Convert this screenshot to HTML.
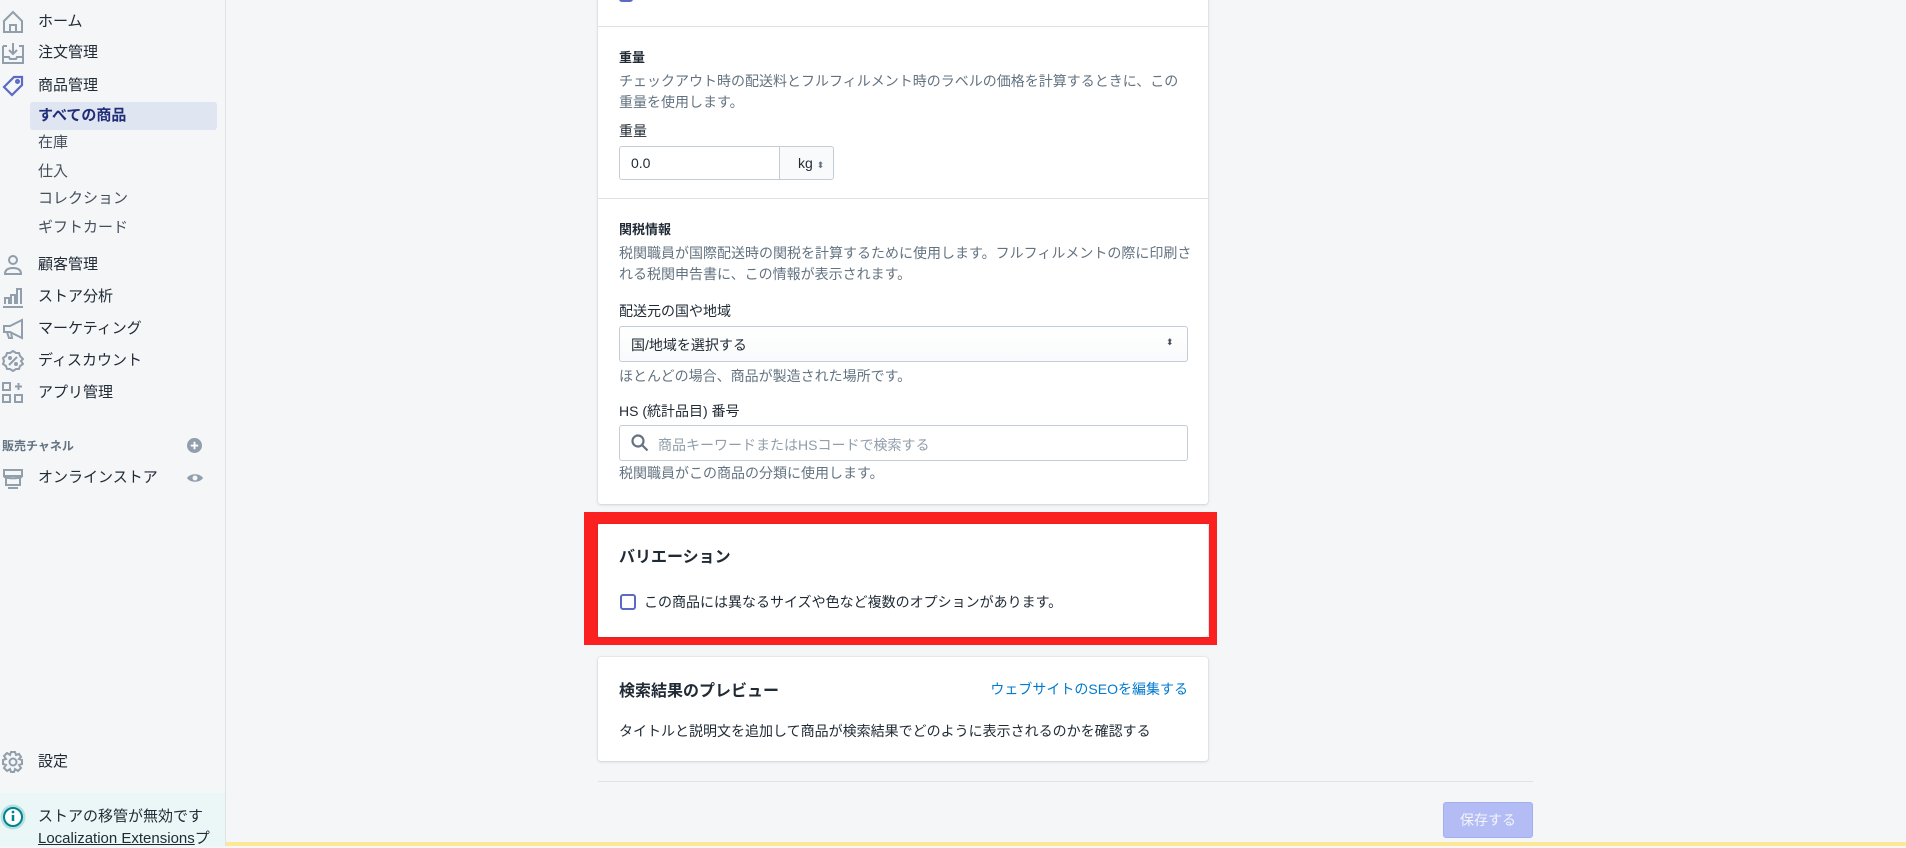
<!DOCTYPE html>
<html><head><meta charset="utf-8"><style>
*{box-sizing:border-box;margin:0;padding:0}
body{width:1906px;height:846px;overflow:hidden;background:#f4f6f8;font-family:"Liberation Sans","Noto Sans CJK JP",sans-serif;color:#212b36;position:relative}
.a{position:absolute;white-space:nowrap}
.side{position:absolute;left:0;top:0;width:226px;height:846px;background:#f4f6f8;border-right:1px solid #dfe3e8}
.nav{font-size:15px;color:#212b36;left:38px;line-height:20px}
.sub{font-size:15px;color:#454f5b;left:38px;line-height:20px}
.ic{position:absolute;left:2px}
.card{position:absolute;left:598px;width:610px;background:#fff;box-shadow:0 0 0 1px rgba(63,63,68,.05),0 1px 3px rgba(63,63,68,.15);border-radius:3px}
.h{font-size:13px;font-weight:bold;color:#212b36}
.d{font-size:14px;color:#637381;line-height:21px}
.l{font-size:14px;color:#212b36}
.inp{position:absolute;border:1px solid #c4cdd5;border-radius:3px;background:#fff}
</style></head><body>
<div class="side">
<svg class="ic" style="top:10px" width="22" height="24" viewBox="0 0 22 24" fill="none" stroke="#919eab" stroke-width="2"><path d="M2 11L11 2l9 9v11H2z M8 22v-7h6v7"/></svg>
<div class="a nav" style="top:12px">ホーム</div>
<svg class="ic" style="top:42px" width="22" height="22" viewBox="0 0 22 22" fill="none" stroke="#919eab" stroke-width="2"><path d="M1 4v17h20V4h-4 M5 4H1 M11 1v11 M7 8l4 4 4-4 M1 15h6l1 2h6l1-2h6"/></svg>
<div class="a nav" style="top:43px">注文管理</div>
<svg class="ic" style="top:75px" width="22" height="22" viewBox="0 0 22 22" fill="none" stroke="#5c6ac4" stroke-width="2.2"><path d="M2 12L12 2h8v8L10 20z"/><circle cx="15.5" cy="6.5" r="1.4"/></svg>
<div class="a nav" style="top:76px">商品管理</div>
<div class="a" style="left:30px;top:102px;width:187px;height:28px;background:#e0e5f2;border-radius:3px"></div>
<div class="a nav" style="top:106px;font-weight:bold;color:#202e78">すべての商品</div>
<div class="a sub" style="top:133px">在庫</div>
<div class="a sub" style="top:162px">仕入</div>
<div class="a sub" style="top:189px">コレクション</div>
<div class="a sub" style="top:218px">ギフトカード</div>
<svg class="ic" style="top:254px" width="22" height="22" viewBox="0 0 22 22" fill="none" stroke="#919eab" stroke-width="2"><circle cx="11" cy="6" r="4"/><path d="M3 20c0-5 4-6 8-6s8 1 8 6z"/></svg>
<div class="a nav" style="top:255px">顧客管理</div>
<svg class="ic" style="top:286px" width="22" height="22" viewBox="0 0 22 22" fill="none" stroke="#919eab" stroke-width="2"><path d="M1 21h20 M3 18v-6h4v6 M9 18V9h4v9 M15 18V3h4v15"/></svg>
<div class="a nav" style="top:287px">ストア分析</div>
<svg class="ic" style="top:318px" width="22" height="22" viewBox="0 0 22 22" fill="none" stroke="#919eab" stroke-width="2"><path d="M2 8h6l12-6v18L8 14H2z M5 14l2 6h3l-1-6"/></svg>
<div class="a nav" style="top:319px">マーケティング</div>
<svg class="ic" style="top:350px" width="22" height="22" viewBox="0 0 22 22" fill="none" stroke="#919eab" stroke-width="2"><path d="M11 1l3 2 3 0 1 3 3 3-2 2 2 3-3 2-1 3h-3l-3 2-3-2H5l-1-3-3-2 1-3-1-3 3-2 1-3h3z M7 15l8-8"/><circle cx="8" cy="8" r="1"/><circle cx="14" cy="14" r="1"/></svg>
<div class="a nav" style="top:351px">ディスカウント</div>
<svg class="ic" style="top:382px" width="22" height="22" viewBox="0 0 22 22" fill="none" stroke="#919eab" stroke-width="2"><rect x="1" y="1" width="7" height="7"/><rect x="1" y="13" width="7" height="7"/><rect x="13" y="13" width="7" height="7"/><path d="M16.5 1v7 M13 4.5h7"/></svg>
<div class="a nav" style="top:383px">アプリ管理</div>
<div class="a" style="left:2px;top:437px;font-size:12px;color:#637381;font-weight:bold">販売チャネル</div>
<svg class="a" style="left:187px;top:438px" width="15" height="15" viewBox="0 0 16 16"><circle cx="8" cy="8" r="8" fill="#919eab"/><path d="M8 4v8M4 8h8" stroke="#fff" stroke-width="2"/></svg>
<svg class="ic" style="top:468px" width="22" height="22" viewBox="0 0 22 22" fill="none" stroke="#919eab" stroke-width="2"><path d="M2 2h18v6H2z M2 8c0 3 18 3 18 0 M4 10v7h14v-7 M6 20h10"/></svg>
<div class="a nav" style="top:468px">オンラインストア</div>
<svg class="a" style="left:186px;top:472px" width="18" height="12" viewBox="0 0 18 12"><path d="M1 6c3-5 13-5 16 0-3 5-13 5-16 0z" fill="#919eab"/><circle cx="9" cy="6" r="2.5" fill="#f4f6f8"/></svg>
<svg class="ic" style="top:751px" width="22" height="22" viewBox="0 0 22 22" fill="none" stroke="#919eab" stroke-width="2"><circle cx="11" cy="11" r="3.5"/><path d="M9 1h4l1 3 3-1 2 3-2 2 0 0 3 1v4l-3 1 2 3-3 3-3-2-1 3H9l-1-3-3 2-3-3 2-3-3-1V9l3-1-2-3 3-3 3 2z"/></svg>
<div class="a nav" style="top:752px">設定</div>
<div class="a" style="left:0;top:793px;width:225px;height:53px;background:#ebf7f6"></div>
<svg class="a" style="left:0;top:804px" width="26" height="26" viewBox="0 0 26 26"><circle cx="13" cy="13" r="12.5" fill="#b4e1e0"/><circle cx="13" cy="13" r="9" fill="#fff" stroke="#00848e" stroke-width="2"/><path d="M13 11v6" stroke="#00848e" stroke-width="2.5"/><circle cx="13" cy="8" r="1.4" fill="#00848e"/></svg>
<div class="a" style="left:38px;top:805px;font-size:15px">ストアの移管が無効です</div>
<div class="a" style="left:38px;top:827px;font-size:15px"><span style="text-decoration:underline">Localization Extensions</span>プ</div>
</div>

<div class="card" style="top:-4px;height:508px;border-radius:0 0 3px 3px">
 <div class="a" style="left:21px;top:0;width:14px;height:6px;border:2px solid #5c6ac4;border-top:none;border-radius:0 0 3px 3px"></div>
 <div class="a" style="left:0;top:30px;width:610px;height:1px;background:#dfe3e8"></div>
 <div class="a h" style="left:21px;top:51px">重量</div>
 <div class="a d" style="left:21px;top:75px;white-space:normal;width:570px">チェックアウト時の配送料とフルフィルメント時のラベルの価格を計算するときに、この重量を使用します。</div>
 <div class="a l" style="left:21px;top:125px">重量</div>
 <div class="inp" style="left:21px;top:150px;width:215px;height:34px"></div>
 <div class="a" style="left:181px;top:151px;width:54px;height:32px;background:#f9fafb;border-left:1px solid #c4cdd5;border-radius:0 3px 3px 0"></div>
 <div class="a l" style="left:33px;top:159px">0.0</div>
 <div class="a l" style="left:200px;top:159px">kg <span style="font-size:9px;color:#637381">⬍</span></div>
 <div class="a" style="left:0;top:202px;width:610px;height:1px;background:#dfe3e8"></div>
 <div class="a h" style="left:21px;top:223px">関税情報</div>
 <div class="a d" style="left:21px;top:247px;white-space:normal;width:585px">税関職員が国際配送時の関税を計算するために使用します。フルフィルメントの際に印刷される税関申告書に、この情報が表示されます。</div>
 <div class="a l" style="left:21px;top:305px">配送元の国や地域</div>
 <div class="inp" style="left:21px;top:330px;width:569px;height:36px;background:linear-gradient(#fff,#f9fafb)"></div>
 <div class="a l" style="left:33px;top:339px">国/地域を選択する</div>
 <div class="a" style="left:568px;top:341px;font-size:9px;color:#454f5b">⬍</div>
 <div class="a d" style="left:21px;top:370px">ほとんどの場合、商品が製造された場所です。</div>
 <div class="a l" style="left:21px;top:405px">HS (統計品目) 番号</div>
 <div class="inp" style="left:21px;top:429px;width:569px;height:36px"></div>
 <svg class="a" style="left:33px;top:438px" width="18" height="18" viewBox="0 0 18 18" fill="none" stroke="#637381" stroke-width="2.2"><circle cx="7" cy="7" r="5.5"/><path d="M11 11l5.5 5.5"/></svg>
 <div class="a" style="left:60px;top:439px;font-size:14px;color:#919eab">商品キーワードまたはHSコードで検索する</div>
 <div class="a d" style="left:21px;top:467px">税関職員がこの商品の分類に使用します。</div>
</div>

<div class="a" style="left:584px;top:512px;width:633px;height:133px;border:8px solid #fb2121;border-width:12px 8px 8px 14px"></div>
<div class="card" style="top:524px;height:113px">
 <div class="a" style="left:21px;top:19px;font-size:16px;font-weight:bold">バリエーション</div>
 <div class="a" style="left:22px;top:70px;width:16px;height:16px;border:2px solid #5c6ac4;border-radius:3px"></div>
 <div class="a" style="left:46px;top:68px;font-size:14px">この商品には異なるサイズや色など複数のオプションがあります。</div>
</div>

<div class="card" style="top:657px;height:104px">
 <div class="a" style="left:21px;top:20px;font-size:16px;font-weight:bold">検索結果のプレビュー</div>
 <div class="a" style="right:20px;top:22px;font-size:14px;color:#007ace">ウェブサイトのSEOを編集する</div>
 <div class="a" style="left:21px;top:64px;font-size:14px">タイトルと説明文を追加して商品が検索結果でどのように表示されるのかを確認する</div>
</div>

<div class="a" style="left:598px;top:781px;width:935px;height:1px;background:#dfe3e8"></div>
<div class="a" style="left:1443px;top:802px;width:90px;height:36px;background:#b3bcf5;border:1px solid #a4b0ea;border-radius:3px;color:#f4f5fa;font-size:14px;text-align:center;line-height:34px">保存する</div>
<div class="a" style="left:226px;top:842px;width:1680px;height:4px;background:#fde995"></div>
</body></html>
